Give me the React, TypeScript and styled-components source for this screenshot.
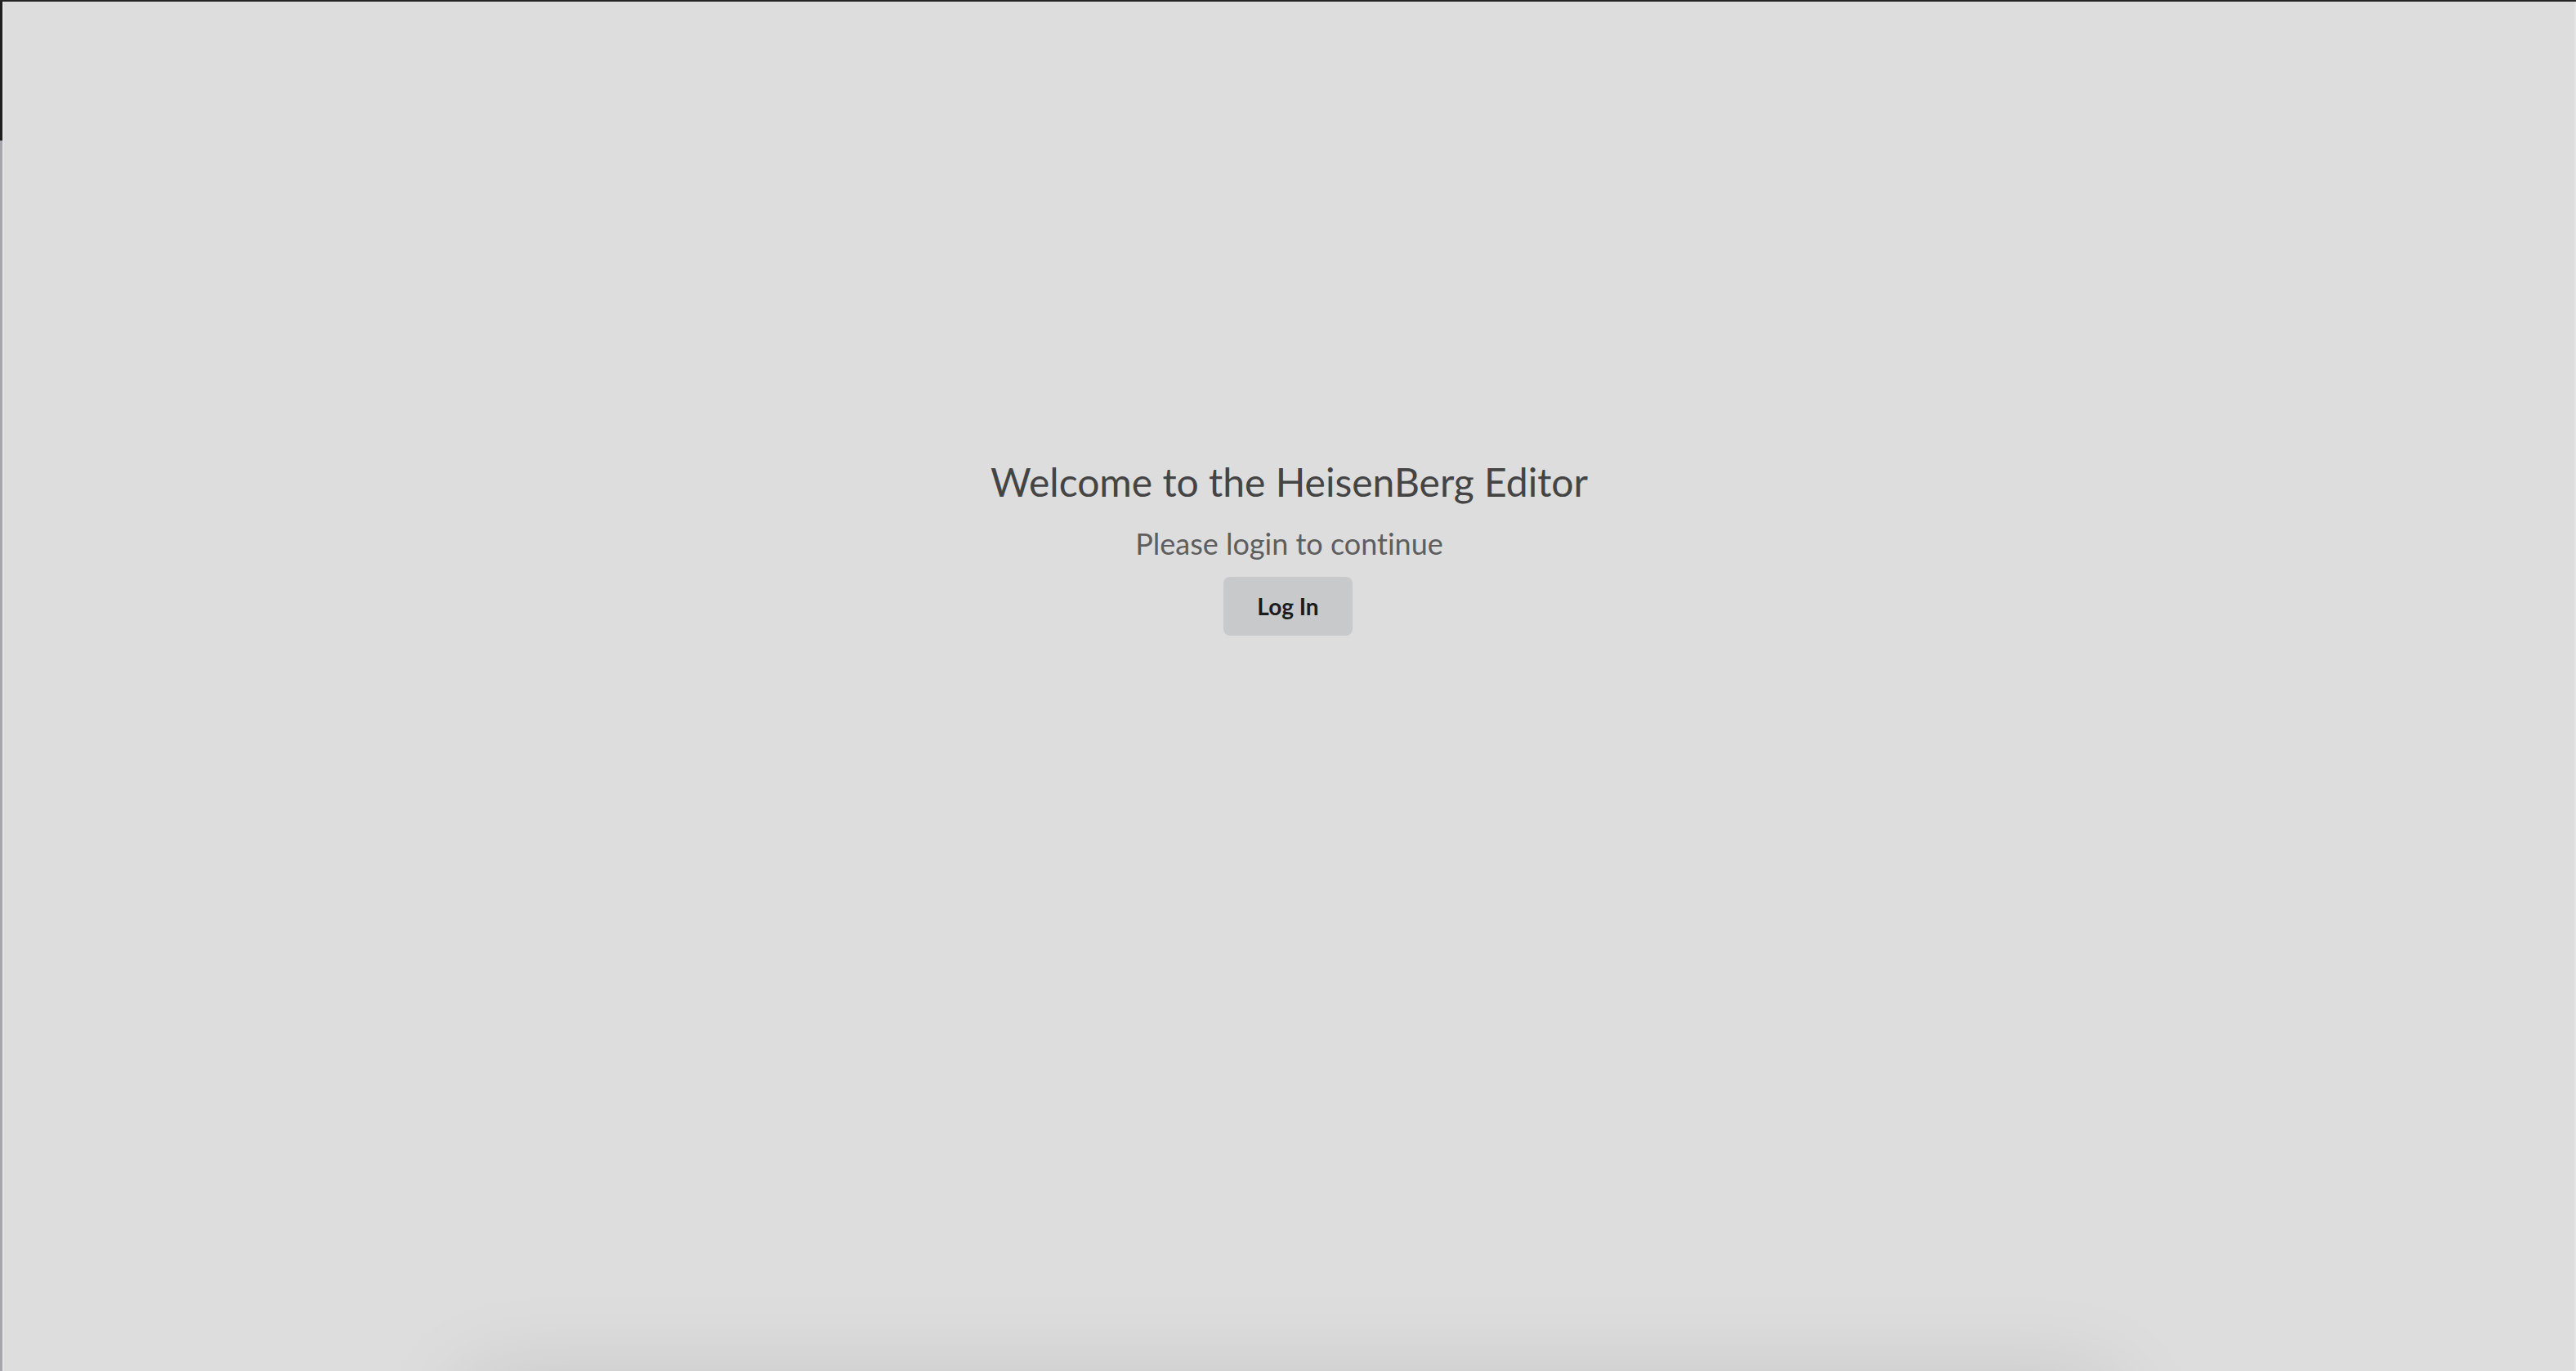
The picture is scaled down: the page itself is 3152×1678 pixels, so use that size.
import React from 'react'
import styled, { createGlobalStyle } from 'styled-components'

const GlobalStyle = createGlobalStyle`
    html, body {
        margin: 0;
        padding: 0;
        height: 100%;
        overflow: hidden;
        background: #dddddd;
        font-family: Lato, "Open Sans", sans-serif;
        font-variant-ligatures: none;
    }
`

const Window = styled.div`
    display: flex;
    height: 100vh;
    box-sizing: border-box;
    border-top: 2px solid #262626;
`

const LeftEdge = styled.div`
    flex: none;
    width: 3px;
    background: linear-gradient(to bottom, #1f1f1f 0, #1f1f1f 170px, #a6a6ad 170px);
    border-right: 2px solid #e4e4e4;
`

const RightEdge = styled.div`
    flex: none;
    width: 2px;
    background: #e4e4e4;
`

const Main = styled.main`
    flex: 1;
    display: flex;
    flex-direction: column;
    overflow: hidden;
`

const Hero = styled.section`
    flex: none;
    height: calc(100vh - 2px);
    box-sizing: border-box;
    padding-top: 559px;
    display: flex;
    flex-direction: column;
    align-items: center;
`

const Title = styled.h1`
    margin: 0;
    font-size: 48px;
    font-weight: 400;
    line-height: 1.2;
    color: #444444;
`

const Subtitle = styled.p`
    margin: 25px 0 0;
    font-size: 36px;
    line-height: 1.2;
    color: #5e5e5e;
`

const LoginButton = styled.button`
    margin-top: 19px;
    margin-right: 3px;
    padding: 20px 41px;
    font-family: inherit;
    font-size: 28px;
    font-weight: 700;
    line-height: 32px;
    color: #1c1c1c;
    background: #c8c9cb;
    border: none;
    border-radius: 8px;
    cursor: pointer;
`

const Sheet = styled.div`
    flex: none;
    width: 2010px;
    height: 600px;
    margin: 18px auto 0;
    background: #dddddd;
    box-shadow: 0 0 110px rgba(0, 0, 0, 0.13);
`

export default function App() {
    return (
        <>
            <GlobalStyle />
            <Window>
                <LeftEdge />
                <Main>
                    <Hero>
                        <Title>Welcome to the HeisenBerg Editor</Title>
                        <Subtitle>Please login to continue</Subtitle>
                        <LoginButton>Log In</LoginButton>
                    </Hero>
                    <Sheet />
                </Main>
                <RightEdge />
            </Window>
        </>
    )
}
